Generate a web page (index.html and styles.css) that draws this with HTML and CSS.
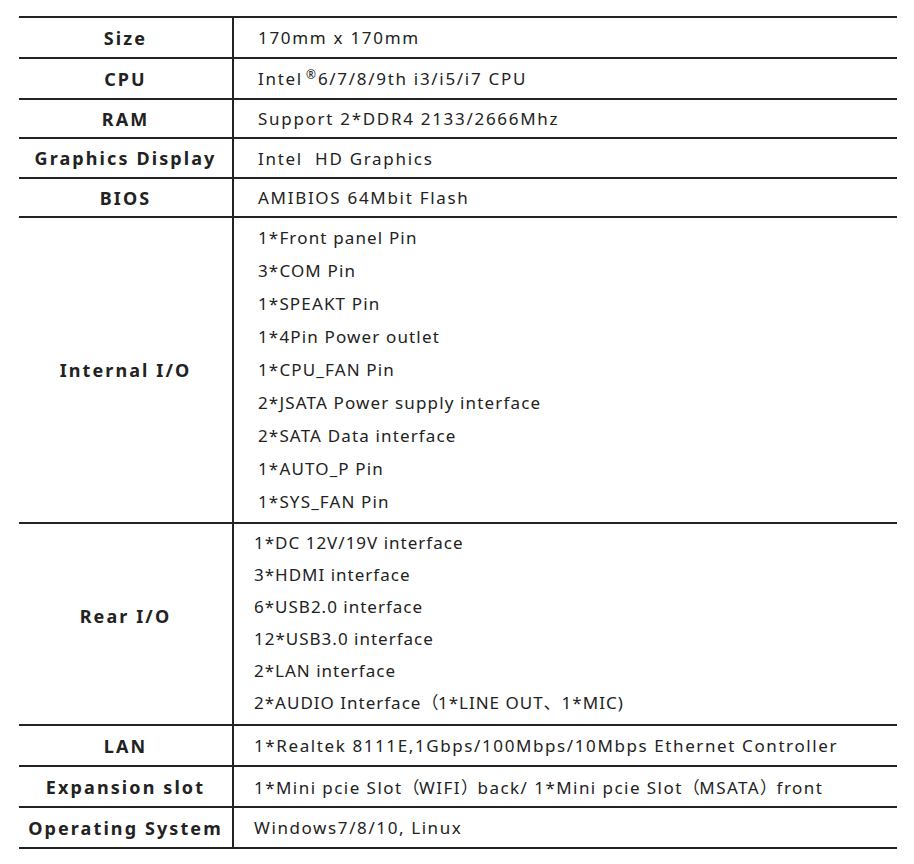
FILE: index.html
```html
<!DOCTYPE html>
<html>
<head>
<meta charset="utf-8">
<link rel="stylesheet" href="styles.css">
</head>
<body>
<div class="page">
<table class="spec">
<tr class="r41"><th>Size</th><td>170mm x 170mm</td></tr>
<tr class="r41"><th>CPU</th><td>Intel<sup>®</sup>6/7/8/9th i3/i5/i7 CPU</td></tr>
<tr class="r39"><th>RAM</th><td>Support 2*DDR4 2133/2666Mhz</td></tr>
<tr class="r40"><th>Graphics Display</th><td>Intel&nbsp; HD Graphics</td></tr>
<tr class="r39"><th>BIOS</th><td>AMIBIOS 64Mbit Flash</td></tr>
<tr><th>Internal I/O</th><td class="list int">
<div>1*Front panel Pin</div>
<div>3*COM Pin</div>
<div>1*SPEAKT Pin</div>
<div>1*4Pin Power outlet</div>
<div>1*CPU_FAN Pin</div>
<div>2*JSATA Power supply interface</div>
<div>2*SATA Data interface</div>
<div>1*AUTO_P Pin</div>
<div>1*SYS_FAN Pin</div>
</td></tr>
<tr><th class="raised">Rear I/O</th><td class="list rear shift">
<div>1*DC 12V/19V interface</div>
<div>3*HDMI interface</div>
<div>6*USB2.0 interface</div>
<div>12*USB3.0 interface</div>
<div>2*LAN interface</div>
<div>2*AUDIO Interface<span class="fw">（</span>1*LINE OUT、1*MIC)</div>
</td></tr>
<tr class="r41"><th>LAN</th><td class="shift wide">1*Realtek 8111E,1Gbps/100Mbps/10Mbps Ethernet Controller</td></tr>
<tr class="r41"><th>Expansion slot</th><td class="shift wide tight">1*Mini pcie Slot<span class="fw">（</span>WIFI<span class="fw">）</span>back/ 1*Mini pcie Slot<span class="fw">（</span>MSATA<span class="fw">）</span>front</td></tr>
<tr class="r41"><th>Operating System</th><td class="shift wide">Windows7/8/10, Linux</td></tr>
</table>
</div>
</body>
</html>
```
FILE: styles.css
```css
html, body {
  margin: 0;
  padding: 0;
  background: #ffffff;
}
.page {
  padding: 16px 0 0 19px;
}
.spec {
  border-collapse: collapse;
  width: 878px;
  font-family: "Noto Sans", "Noto Sans CJK SC", sans-serif;
  color: #222222;
}
.spec th, .spec td {
  border-top: 2px solid #222222;
  border-bottom: 2px solid #222222;
  padding: 0;
}
.spec th {
  width: 213px;
  border-right: 2px solid #222222;
  font-size: 18px;
  font-weight: 700;
  letter-spacing: 2.1px;
  text-align: center;
}
.spec th.raised {
  padding-bottom: 16px;
}
.spec td {
  font-size: 17px;
  letter-spacing: 1.7px;
  padding-left: 24px;
}
.spec td.shift {
  padding-left: 20px;
}
.spec td.wide {
  letter-spacing: 1.6px;
}
.spec td.tight {
  letter-spacing: 1.45px;
}
.spec td.int {
  letter-spacing: 1.15px;
  padding-top: 3px;
  padding-bottom: 4px;
}
.spec td.rear {
  letter-spacing: 1px;
  padding-top: 3px;
  padding-bottom: 5px;
}
.fw {
  letter-spacing: -2.5px;
  margin-right: 2px;
}
.r41 { height: 41px; }
.r40 { height: 40px; }
.r39 { height: 39px; }
.spec sup {
  font-size: 12px;
  vertical-align: 6px;
  line-height: 0;
  letter-spacing: 0;
  margin-left: 3px;
  margin-right: 2px;
}
.int div {
  height: 33px;
  line-height: 33px;
}
.rear div {
  height: 32px;
  line-height: 32px;
}
```
